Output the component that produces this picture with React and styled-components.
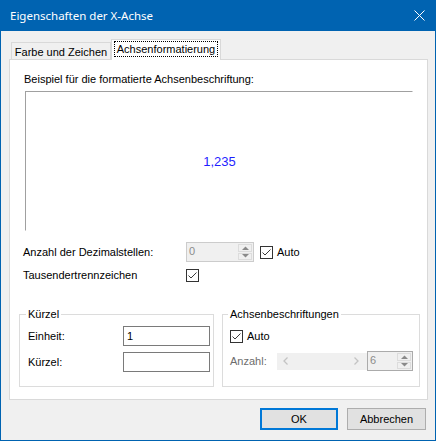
import React from "react";
import styled, { createGlobalStyle } from "styled-components";

const Global = createGlobalStyle`
  html, body { margin: 0; padding: 0; background: #ffffff; }
  body {
    font-family: "Liberation Sans", Arial, sans-serif;
    font-size: 11px;
    color: #000;
  }
  * { box-sizing: border-box; }
`;

const Window = styled.div`
  width: 436px;
  height: 441px;
  background: #0063b1;
  display: flex;
  flex-direction: column;
`;

const TitleBar = styled.div`
  flex: none;
  height: 31px;
  display: flex;
  align-items: center;
  justify-content: space-between;
  padding: 0 11px 1px 10px;
  color: #fff;
  font-family: "Noto Sans", "Open Sans", sans-serif;
  font-size: 11.5px;
`;

const CloseIcon = () => (
  <svg width="11" height="11" viewBox="0 0 11 11">
    <path d="M0.5 0.5 L10.5 10.5 M10.5 0.5 L0.5 10.5" stroke="#fff" strokeWidth="1" fill="none" />
  </svg>
);

const Body = styled.div`
  flex: 1;
  margin: 0 1px 1px 1px;
  background: #f0f0f0;
  padding: 8px 7px 0 8px;
  display: flex;
  flex-direction: column;
`;

const TabStrip = styled.div`
  height: 20px;
  display: flex;
  align-items: flex-end;
  padding-left: 2px;
`;

const Tab = styled.div`
  position: relative;
  display: flex;
  align-items: center;
  justify-content: center;
  border: 1px solid #d9d9d9;
  border-bottom: none;
  background: ${(p) => (p.$active ? "#ffffff" : "#f0f0f0")};
  width: ${(p) => p.$width}px;
  height: ${(p) => (p.$active ? 21 : 17)}px;
  margin-bottom: ${(p) => (p.$active ? -1 : 0)}px;
  z-index: ${(p) => (p.$active ? 2 : 0)};
  padding: ${(p) => (p.$active ? "1px 2px 3px" : "1px 0 0")};
`;

const FocusBox = styled.span`
  display: flex;
  align-items: center;
  justify-content: center;
  width: 100%;
  height: 100%;
  border: 1px dotted #000;
`;

const Panel = styled.div`
  position: relative;
  z-index: 1;
  height: 341px;
  border: 1px solid #d9d9d9;
  background: #ffffff;
  display: flex;
  flex-direction: column;
`;

const Caption = styled.div`
  line-height: 13px;
  margin: 13px 0 0 14px;
`;

const Preview = styled.div`
  margin: 5px 0 0 15px;
  width: 388px;
  height: 140px;
  border-top: 1px solid #a0a0a0;
  border-left: 1px solid #a0a0a0;
  border-right: 1px solid #ffffff;
  border-bottom: 1px solid #ffffff;
  display: flex;
  align-items: center;
  justify-content: center;
  padding-left: 1px;
`;

const SampleValue = styled.span`
  color: #1f1fff;
  font-size: 13px;
`;

const FormRow = styled.div`
  display: grid;
  grid-template-columns: 163px auto auto;
  justify-content: start;
  align-items: center;
  margin: ${(p) => p.$top}px 0 0 13px;
  height: ${(p) => p.$h}px;
`;

const Label = styled.span`
  line-height: 13px;
  color: ${(p) => (p.$disabled ? "#6d6d6d" : "#000")};
`;

const CheckWrap = styled.label`
  display: flex;
  align-items: center;
  gap: 4px;
  margin-left: ${(p) => p.$ml || 0}px;
  line-height: 13px;
`;

const Box = styled.span`
  width: 13px;
  height: 13px;
  border: 1px solid #333333;
  background: #fff;
  display: flex;
  align-items: center;
  justify-content: center;
`;

const Check = () => (
  <svg width="11" height="11" viewBox="0 0 11 11">
    <path d="M1.5 5.5 L4 8 L9.5 2.5" stroke="#3a3a3a" strokeWidth="1" fill="none" />
  </svg>
);

const CheckBox = ({ label, ml }) => (
  <CheckWrap $ml={ml}>
    <Box>
      <Check />
    </Box>
    {label && <span>{label}</span>}
  </CheckWrap>
);

const Spin = styled.div`
  width: ${(p) => p.$w}px;
  height: ${(p) => p.$h}px;
  border: 1px solid ${(p) => p.$border};
  background: #f0f0f0;
  display: flex;
`;

const SpinValue = styled.span`
  flex: 1;
  color: #8c8c8c;
  padding: 2px 0 0 2px;
  line-height: 13px;
`;

const SpinButtons = styled.div`
  width: 15px;
  display: flex;
  flex-direction: column;
  gap: 1px;
  padding: 1px 1px 1px 0;
`;

const SpinButton = styled.div`
  flex: 1;
  border: 1px solid #dcdcdc;
  background: #f0f0f0;
  display: flex;
  align-items: center;
  justify-content: center;
`;

const Arrow = ({ up }) => (
  <svg width="7" height="4" viewBox="0 0 7 4">
    <path d={up ? "M0 4 L3.5 0.5 L7 4 Z" : "M0 0 L3.5 3.5 L7 0 Z"} fill="#8a8a8a" />
  </svg>
);

const SpinBox = ({ value, w, h, border }) => (
  <Spin $w={w} $h={h} $border={border}>
    <SpinValue>{value}</SpinValue>
    <SpinButtons>
      <SpinButton>
        <Arrow up />
      </SpinButton>
      <SpinButton>
        <Arrow />
      </SpinButton>
    </SpinButtons>
  </Spin>
);

const Groups = styled.div`
  display: flex;
  gap: 8px;
  margin: 26px 0 0 9px;
`;

const Group = styled.fieldset`
  margin: 0;
  min-width: 0;
  width: ${(p) => p.$w}px;
  height: 79px;
  border: 1px solid #dcdcdc;
  padding: 5px 4px 0 ${(p) => p.$pl}px;
  display: flex;
  flex-direction: column;
  gap: ${(p) => p.$gap}px;
`;

const Legend = styled.legend`
  padding: 0 2px;
  margin-left: -2px;
  line-height: 13px;
`;

const FieldRow = styled.div`
  display: grid;
  grid-template-columns: ${(p) => p.$label}px auto auto;
  justify-content: start;
  align-items: center;
  height: ${(p) => p.$h}px;
  margin-top: ${(p) => p.$top || 0}px;
`;

const TextBox = styled.div`
  width: 87px;
  height: 20px;
  border: 1px solid #7a7a7a;
  background: #fff;
  padding: 3px 0 0 3px;
  line-height: 13px;
`;

const ScrollBar = styled.div`
  width: 90px;
  height: 17px;
  background: #f0f0f0;
  display: flex;
  align-items: center;
  justify-content: space-between;
  padding: 0 8px 0 6px;
`;

const Chevron = ({ right }) => (
  <svg width="5" height="8" viewBox="0 0 5 8">
    <path d={right ? "M0.5 0.5 L4 4 L0.5 7.5" : "M4.5 0.5 L1 4 L4.5 7.5"} stroke="#c3c3c3" strokeWidth="1.3" fill="none" />
  </svg>
);

const Buttons = styled.div`
  display: flex;
  justify-content: flex-end;
  gap: 9px;
  margin: 8px 2px 0 0;
`;

const Button = styled.button`
  width: ${(p) => p.$w}px;
  height: 22px;
  margin: 0;
  padding: 0;
  font: inherit;
  color: #000;
  background: #e1e1e1;
  border: ${(p) => (p.$default ? "2px solid #0078d7" : "1px solid #adadad")};
`;

export default function App() {
  return (
    <>
      <Global />
      <Window>
        <TitleBar>
          <span>Eigenschaften der X-Achse</span>
          <CloseIcon />
        </TitleBar>
        <Body>
          <TabStrip>
            <Tab $width={100}>Farbe und Zeichen</Tab>
            <Tab $active $width={110}>
              <FocusBox>Achsenformatierung</FocusBox>
            </Tab>
          </TabStrip>
          <Panel>
            <Caption>Beispiel für die formatierte Achsenbeschriftung:</Caption>
            <Preview>
              <SampleValue>1,235</SampleValue>
            </Preview>
            <FormRow $top={11} $h={20}>
              <Label>Anzahl der Dezimalstellen:</Label>
              <SpinBox value="0" w={68} h={20} border="#cccccc" />
              <CheckBox label="Auto" ml={6} />
            </FormRow>
            <FormRow $top={7} $h={13}>
              <Label>Tausendertrennzeichen</Label>
              <CheckBox />
            </FormRow>
            <Groups>
              <Group $w={195} $pl={8} $gap={6}>
                <Legend>Kürzel</Legend>
                <FieldRow $label={95} $h={20}>
                  <Label>Einheit:</Label>
                  <TextBox>1</TextBox>
                </FieldRow>
                <FieldRow $label={95} $h={20}>
                  <Label>Kürzel:</Label>
                  <TextBox />
                </FieldRow>
              </Group>
              <Group $w={198} $pl={7} $gap={8}>
                <Legend>Achsenbeschriftungen</Legend>
                <FieldRow $label={0} $h={13} $top={4}>
                  <span />
                  <CheckBox label="Auto" />
                </FieldRow>
                <FieldRow $label={47} $h={20}>
                  <Label $disabled>Anzahl:</Label>
                  <ScrollBar>
                    <Chevron />
                    <Chevron right />
                  </ScrollBar>
                  <SpinBox value="6" w={46} h={20} border="#ababab" />
                </FieldRow>
              </Group>
            </Groups>
          </Panel>
          <Buttons>
            <Button $default $w={78}>OK</Button>
            <Button $w={79}>Abbrechen</Button>
          </Buttons>
        </Body>
      </Window>
    </>
  );
}
